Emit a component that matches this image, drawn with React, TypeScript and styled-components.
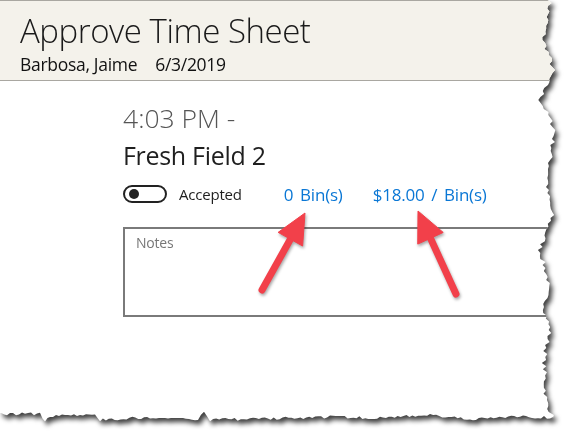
import React from "react";
import styled, { createGlobalStyle } from "styled-components";

const GlobalStyle = createGlobalStyle`
  html, body {
    margin: 0;
    padding: 0;
    background: #ffffff;
  }
  body {
    font-family: "Open Sans", "Noto Sans", sans-serif;
  }
`;

// torn paper edge, built once from a seeded random so it is the same every run
let seed = 7;
const rand = () => {
  seed = (seed * 16807) % 2147483647;
  return (seed - 1) / 2147483646;
};

const rightKeys: [number, number][] = [
  [0, 550], [20, 547], [40, 543], [55, 549], [70, 553], [85, 546],
  [100, 540], [115, 548], [130, 555], [160, 550], [190, 547], [215, 552],
  [250, 540], [280, 548], [310, 545], [330, 550], [360, 544], [400, 546], [418, 553],
];

const bottomKeys: [number, number][] = [
  [553, 418], [520, 416], [470, 419], [430, 415], [380, 418], [330, 417],
  [250, 419], [210, 420], [204, 411], [198, 419], [150, 417], [100, 420],
  [95, 414], [50, 416], [45, 421], [40, 414], [7, 414], [-10, 414],
];

const lerpKeys = (keys: [number, number][], step: number, jitter: number) => {
  const pts: [number, number][] = [];
  for (let i = 0; i < keys.length - 1; i++) {
    const [a0, b0] = keys[i];
    const [a1, b1] = keys[i + 1];
    const n = Math.max(1, Math.round(Math.abs(a1 - a0) / step));
    for (let k = 0; k < n; k++) {
      const t = k / n;
      pts.push([a0 + (a1 - a0) * t, b0 + (b1 - b0) * t + (rand() - 0.5) * jitter]);
    }
  }
  pts.push(keys[keys.length - 1]);
  return pts;
};

const tornPolygon = (() => {
  const right = lerpKeys(rightKeys, 3, 5).map(([y, x]) => `${x.toFixed(1)}px ${y.toFixed(1)}px`);
  const bottom = lerpKeys(bottomKeys, 3, 3).map(([x, y]) => `${x.toFixed(1)}px ${y.toFixed(1)}px`);
  return `polygon(-10px 0px, ${right.join(", ")}, ${bottom.join(", ")})`;
})();

const Stage = styled.div`
  width: 565px;
  height: 437px;
  overflow: hidden;
  filter: drop-shadow(3px 4px 2.5px rgba(0, 0, 0, 0.75));
`;

const Paper = styled.div<{ $clip: string }>`
  position: relative;
  width: 565px;
  height: 437px;
  background: #ffffff;
  clip-path: ${(p) => p.$clip};
`;

const Header = styled.header`
  height: 81px;
  box-sizing: border-box;
  padding: 10px 0 0 20px;
  background: #f4f2eb;
  border-top: 1px solid #a9a7a1;
  border-bottom: 1px solid #a9a7a1;
`;

const Title = styled.h1`
  margin: 0;
  font-size: 33px;
  font-weight: 300;
  line-height: 40px;
  color: #1a1a1a;
  letter-spacing: -0.45px;
`;

const SubTitle = styled.div`
  display: flex;
  gap: 18px;
  margin-top: 2px;
  font-size: 17.5px;
  line-height: 22px;
  color: #111111;
  letter-spacing: -0.3px;
`;

const Content = styled.main`
  padding: 20px 0 0 123px;
  display: flex;
  flex-direction: column;
`;

const Time = styled.div`
  font-size: 26.5px;
  font-weight: 300;
  line-height: 34px;
  color: #555555;
`;

const Field = styled.div`
  font-size: 25px;
  font-weight: 400;
  line-height: 40px;
  color: #1f1f1f;
  letter-spacing: -0.3px;
`;

const StatusRow = styled.div`
  display: flex;
  align-items: center;
  margin-top: 8px;
  height: 22px;
`;

const Toggle = styled.span`
  box-sizing: border-box;
  width: 44px;
  height: 18px;
  border: 2px solid #222222;
  border-radius: 9px;
  display: flex;
  align-items: center;
  padding-left: 4px;
`;

const Knob = styled.span`
  width: 10px;
  height: 10px;
  border-radius: 50%;
  background: #222222;
`;

const Label = styled.span`
  margin-left: 12px;
  font-size: 15px;
  color: #1f1f1f;
  letter-spacing: -0.2px;
`;

const Link = styled.span<{ $gap: number }>`
  margin-left: ${(p) => p.$gap}px;
  font-size: 17px;
  color: #0a77d5;
  letter-spacing: -0.2px;
  word-spacing: 2.5px;
`;

const Notes = styled.div`
  margin-top: 22px;
  width: 440px;
  height: 90px;
  box-sizing: border-box;
  border: 2px solid #7a7a7a;
  padding: 4px 11px;
  font-size: 14px;
  color: #777777;
  letter-spacing: -0.2px;
`;

const Arrows = styled.svg`
  position: absolute;
  left: 0;
  top: 0;
  width: 565px;
  height: 437px;
  pointer-events: none;
  filter: drop-shadow(1px 2px 1.5px rgba(0, 0, 0, 0.35));
`;

const Arrow: React.FC<{ tail: [number, number]; tip: [number, number] }> = ({ tail, tip }) => {
  const dx = tip[0] - tail[0];
  const dy = tip[1] - tail[1];
  const len = Math.hypot(dx, dy);
  const ux = dx / len;
  const uy = dy / len;
  const headLen = 30;
  const headHalf = 14;
  const bx = tip[0] - ux * headLen;
  const by = tip[1] - uy * headLen;
  const px = -uy;
  const py = ux;
  return (
    <g fill="#f2404a" stroke="#f2404a">
      <line
        x1={tail[0]}
        y1={tail[1]}
        x2={bx + ux * 4}
        y2={by + uy * 4}
        strokeWidth={7}
        strokeLinecap="round"
      />
      <polygon
        points={`${tip[0]},${tip[1]} ${bx + px * headHalf},${by + py * headHalf} ${bx - px * headHalf},${by - py * headHalf}`}
        strokeWidth={1}
        strokeLinejoin="round"
      />
    </g>
  );
};

export default function App() {
  return (
    <>
      <GlobalStyle />
      <Stage>
        <Paper $clip={tornPolygon}>
          <Header>
            <Title>Approve Time Sheet</Title>
            <SubTitle>
              <span>Barbosa, Jaime</span>
              <span>6/3/2019</span>
            </SubTitle>
          </Header>
          <Content>
            <Time>4:03 PM -</Time>
            <Field>Fresh Field 2</Field>
            <StatusRow>
              <Toggle>
                <Knob />
              </Toggle>
              <Label>Accepted</Label>
              <Link $gap={42}>0 Bin(s)</Link>
              <Link $gap={30}>$18.00 / Bin(s)</Link>
            </StatusRow>
            <Notes>Notes</Notes>
          </Content>
          <Arrows viewBox="0 0 565 437">
            <Arrow tail={[262, 290]} tip={[305, 213]} />
            <Arrow tail={[456, 294]} tip={[418, 211]} />
          </Arrows>
        </Paper>
      </Stage>
    </>
  );
}
